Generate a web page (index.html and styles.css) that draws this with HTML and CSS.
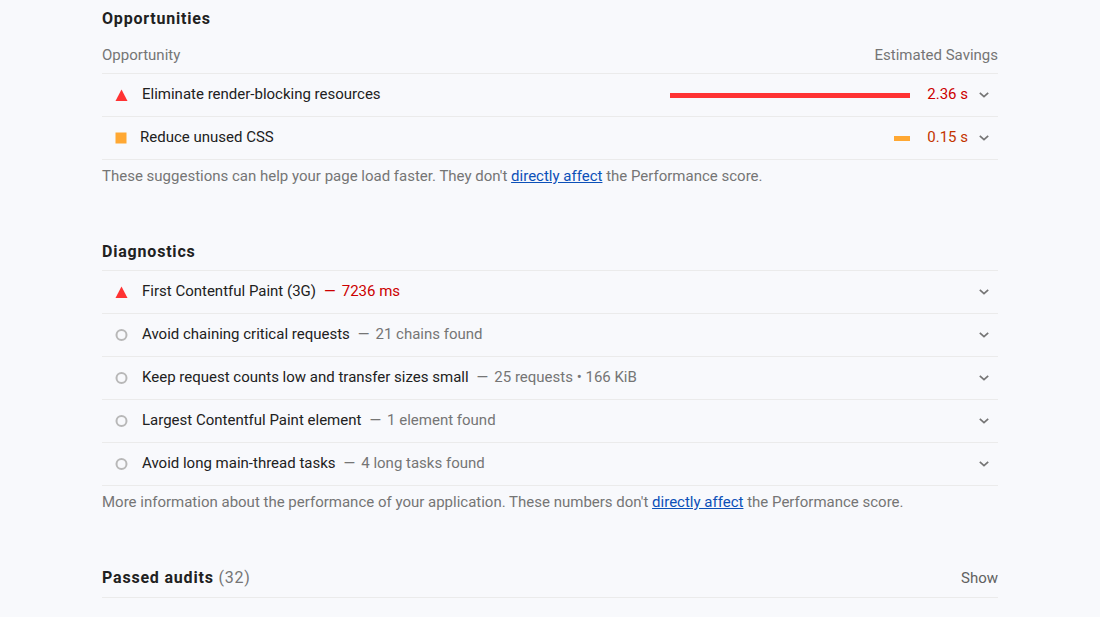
FILE: index.html
```html
<!DOCTYPE html>
<html lang="en">
<head>
    <meta charset="UTF-8">
    <meta name="viewport" content="width=device-width, initial-scale=1.0">
    <title>Performance report</title>
    <link rel="stylesheet" href="styles.css">
</head>
<body>
    <svg class="sprite" width="0" height="0">
        <symbol id="fail" viewBox="0 0 12 12"><path d="M6 0.5L12 12H0z" fill="#ff3333"/></symbol>
        <symbol id="average" viewBox="0 0 12 12"><path d="M0.5 0.5h11v11H0.5z" fill="#ffa833"/></symbol>
        <symbol id="info" viewBox="0 0 12 12"><circle cx="6" cy="6" r="5" fill="none" stroke="#b8b8b8" stroke-width="2"/></symbol>
        <symbol id="chevron" viewBox="0 0 10 6"><path d="M0.8 0.8L5 4.6L9.2 0.8" fill="none" stroke="#757575" stroke-width="1.7"/></symbol>
    </svg>

    <main class="report">
        <section class="group">
            <h2 class="group-title">Opportunities</h2>
            <div class="load-header">
                <span>Opportunity</span>
                <span>Estimated Savings</span>
            </div>
            <div class="audits">
                <details class="audit">
                    <summary>
                        <svg class="icon"><use href="#fail"/></svg>
                        <span class="audit-title">Eliminate render-blocking resources</span>
                        <span class="sparkline"><span class="bar bar-fail" style="width: 100%"></span></span>
                        <span class="savings fail">2.36 s</span>
                        <svg class="chevron"><use href="#chevron"/></svg>
                    </summary>
                </details>
                <details class="audit audit-average">
                    <summary>
                        <svg class="icon"><use href="#average"/></svg>
                        <span class="audit-title">Reduce unused CSS</span>
                        <span class="sparkline"><span class="bar bar-average" style="width: 6.5%"></span></span>
                        <span class="savings average">0.15 s</span>
                        <svg class="chevron"><use href="#chevron"/></svg>
                    </summary>
                </details>
            </div>
            <p class="group-footer">These suggestions can help your page load faster. They don't <a href="#">directly affect</a> the Performance score.</p>
        </section>

        <section class="group">
            <h2 class="group-title">Diagnostics</h2>
            <div class="audits">
                <details class="audit">
                    <summary>
                        <svg class="icon"><use href="#fail"/></svg>
                        <span class="audit-title">First Contentful Paint (3G)</span>
                        <span class="display-text fail">7236 ms</span>
                        <svg class="chevron"><use href="#chevron"/></svg>
                    </summary>
                </details>
                <details class="audit">
                    <summary>
                        <svg class="icon"><use href="#info"/></svg>
                        <span class="audit-title">Avoid chaining critical requests</span>
                        <span class="display-text">21 chains found</span>
                        <svg class="chevron"><use href="#chevron"/></svg>
                    </summary>
                </details>
                <details class="audit">
                    <summary>
                        <svg class="icon"><use href="#info"/></svg>
                        <span class="audit-title">Keep request counts low and transfer sizes small</span>
                        <span class="display-text">25 requests • 166 KiB</span>
                        <svg class="chevron"><use href="#chevron"/></svg>
                    </summary>
                </details>
                <details class="audit">
                    <summary>
                        <svg class="icon"><use href="#info"/></svg>
                        <span class="audit-title">Largest Contentful Paint element</span>
                        <span class="display-text">1 element found</span>
                        <svg class="chevron"><use href="#chevron"/></svg>
                    </summary>
                </details>
                <details class="audit">
                    <summary>
                        <svg class="icon"><use href="#info"/></svg>
                        <span class="audit-title">Avoid long main-thread tasks</span>
                        <span class="display-text">4 long tasks found</span>
                        <svg class="chevron"><use href="#chevron"/></svg>
                    </summary>
                </details>
            </div>
            <p class="group-footer">More information about the performance of your application. These numbers don't <a href="#">directly affect</a> the Performance score.</p>
        </section>

        <details class="passed">
            <summary>
                <h2 class="group-title">Passed audits <span class="count">(32)</span></h2>
                <span class="show">Show</span>
            </summary>
        </details>
    </main>
</body>
</html>
```
FILE: styles.css
```css
body {
    font-family: Roboto, sans-serif;
    font-size: 15px;
    line-height: 20px;
    background-color: #f8f9fc;
    margin: 0;
    padding: 9px 24px;
    color: #212121;
}
.sprite {
    position: absolute;
}
.report {
    max-width: 896px;
    margin: 0 auto;
}
.group {
    margin-bottom: 56px;
}
.group-title {
    margin: 0;
    font-size: 16px;
    line-height: 20px;
    font-weight: bold;
    letter-spacing: 0.05em;
}
.load-header {
    display: flex;
    justify-content: space-between;
    padding-top: 16px;
    color: #757575;
}
.audits {
    margin-top: 8px;
    border-top: 1px solid #ebebeb;
}
.audit {
    border-bottom: 1px solid #ebebeb;
}
summary {
    display: flex;
    align-items: center;
    list-style: none;
    cursor: pointer;
}
.audit summary {
    min-height: 42px;
    padding: 0 9px 0 13px;
}
.audit-title,
.savings,
.display-text {
    padding-bottom: 2px;
}
.icon {
    width: 13px;
    height: 12px;
    margin-right: 14px;
    flex: none;
}
.audit-average .icon {
    width: 12px;
    margin-right: 13px;
}
.sparkline {
    display: flex;
    justify-content: flex-end;
    width: 240px;
    margin-left: auto;
}
.bar {
    height: 5px;
}
.bar-fail {
    background-color: #ff3333;
}
.bar-average {
    background-color: #ffa833;
}
.savings {
    width: 58px;
    text-align: right;
}
.display-text {
    margin-left: 8px;
    color: #757575;
}
.display-text::before {
    content: '—';
    margin-right: 6px;
}
.fail {
    color: #cc0000;
}
.average {
    color: #c33300;
}
.chevron {
    width: 10px;
    height: 6px;
    margin-left: auto;
    flex: none;
}
.savings + .chevron {
    margin-left: 11px;
}
.group-footer {
    margin: 0;
    padding-top: 6px;
    color: #757575;
}
.group-footer a {
    color: #0c50b8;
}
.passed {
    border-bottom: 1px solid #ebebeb;
}
.passed summary {
    justify-content: space-between;
    padding-bottom: 9px;
}
.count {
    font-weight: normal;
    color: #757575;
}
.show {
    color: #616161;
}
```
